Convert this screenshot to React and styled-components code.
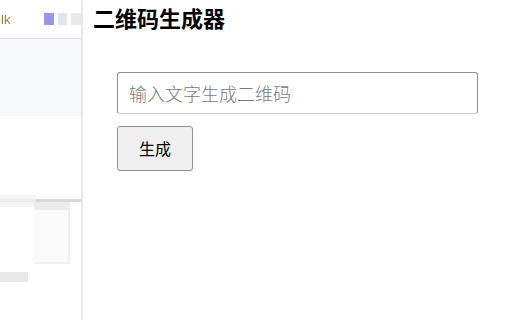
import React from 'react'
import styled, { createGlobalStyle } from 'styled-components'

const GlobalStyle = createGlobalStyle`
  html, body {
    margin: 0;
    padding: 0;
    background: #fff;
  }
  body {
    font-family: "Liberation Sans", "Noto Sans CJK SC", sans-serif;
  }
`

const Screen = styled.div`
  display: flex;
  width: 512px;
  height: 320px;
  overflow: hidden;
`

const BackPage = styled.div`
  width: 81px;
  flex-shrink: 0;
  display: flex;
  flex-direction: column;
  background: #fff;
  filter: blur(0.6px);
`

const TopBar = styled.div`
  height: 38px;
  display: flex;
  align-items: center;
  gap: 4px;
  border-bottom: 1px solid #e3e3e3;
`

const Logo = styled.span`
  font-size: 13px;
  color: #a8782a;
  padding-left: 1px;
  width: 40px;
`

const Blot = styled.span`
  display: block;
  width: ${p => p.w}px;
  height: ${p => p.h}px;
  background: ${p => p.c};
  opacity: 0.8;
`

const GreyBand = styled.div`
  height: 77px;
  background: #f7f8fa;
`

const Gap = styled.div`
  height: ${p => p.h}px;
`

const Rule = styled.div`
  display: flex;
  align-items: center;
  height: 3px;
  background: #c9c9c9;
  opacity: 0.7;
`

const Card = styled.div`
  margin-left: 34px;
  width: 34px;
  height: 60px;
  border-right: 2px solid #f0f0f0;
  border-bottom: 2px solid #f0f0f0;
  background: linear-gradient(#ececec 0 8px, #fafafa 8px);
`

const Panel = styled.main`
  flex: 1;
  border-left: 2px solid #e8e8e8;
  box-shadow: -1px 0 2px rgba(0, 0, 0, 0.06);
  padding: 0 10px;
  background: #fff;
`

const Title = styled.h1`
  margin: 3px 0 0;
  font-size: 22px;
  line-height: 28px;
  font-weight: bold;
  color: #000;
  font-family: "Noto Sans CJK SC", sans-serif;
`

const Form = styled.div`
  display: flex;
  flex-direction: column;
  align-items: flex-start;
  gap: 12px;
  padding: 41px 24px 0;
`

const TextInput = styled.input`
  box-sizing: border-box;
  width: 361px;
  height: 42px;
  padding: 0 11px;
  font-size: 18px;
  font-family: "Noto Sans CJK SC", sans-serif;
  font-weight: 300;
  border: 1px solid #8f8f8f;
  border-bottom-color: #c8c8c8;
  border-radius: 3px;
  outline: none;
  &::placeholder {
    color: #7a7a7a;
  }
`

const Button = styled.button`
  box-sizing: border-box;
  width: 76px;
  height: 45px;
  padding-bottom: 3px;
  font-size: 16px;
  font-family: "Noto Sans CJK SC", sans-serif;
  color: #000;
  background: #efefef;
  border: 1px solid #8f8f8f;
  border-radius: 3px;
  cursor: pointer;
`

const App = () => (
  <Screen>
    <GlobalStyle />
    <BackPage>
      <TopBar>
        <Logo>lk</Logo>
        <Blot w={10} h={12} c="#7c7ce6" />
        <Blot w={10} h={12} c="#dcdcf4" />
        <Blot w={10} h={12} c="#e4e4e4" />
      </TopBar>
      <GreyBand />
      <Gap h={83} />
      <Rule>
        <Blot w={36} h={12} c="#ececec" />
      </Rule>
      <Card />
      <Gap h={8} />
      <Blot w={28} h={10} c="#e2e2e2" />
    </BackPage>
    <Panel>
      <Title>二维码生成器</Title>
      <Form>
        <TextInput placeholder="输入文字生成二维码" />
        <Button>生成</Button>
      </Form>
    </Panel>
  </Screen>
)

export default App
